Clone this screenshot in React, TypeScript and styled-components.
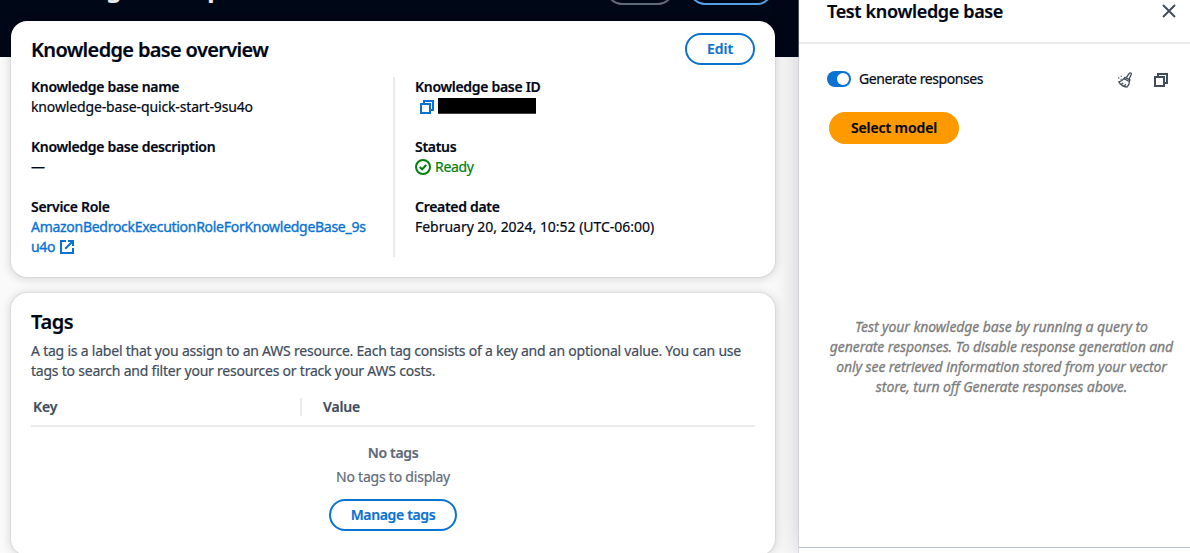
import React from "react";
import styled, { createGlobalStyle } from "styled-components";

const GlobalStyle = createGlobalStyle`
  * { box-sizing: border-box; }
  body {
    margin: 0;
    overflow: hidden;
    background: #fff;
    color: #000716;
    font: 400 14px/20px "Noto Sans", "Open Sans", sans-serif;
    -webkit-text-stroke: 0.2px;
  }
  h1, h2, p, dl, dt, dd { margin: 0; }
`;

const Shell = styled.div`
  display: flex;
  width: 1190px;
  height: 553px;
  overflow: hidden;
`;

const Main = styled.main`
  width: 799px;
  flex: none;
  background: #fafafa;
`;

const Banner = styled.header`
  display: flex;
  justify-content: space-between;
  align-items: flex-start;
  height: 57px;
  padding: 0 26px 0 11px;
  background: #000716;
`;

const PageTitle = styled.h1`
  margin-top: -27px;
  font-size: 24px;
  line-height: 30px;
  font-weight: 700;
  letter-spacing: -0.98px;
  color: #e9ebed;
`;

const BannerActions = styled.div`
  display: flex;
  gap: 15px;
  margin-top: -27px;
`;

const BannerButton = styled.span<{ $width: number; $color: string }>`
  width: ${(p) => p.$width}px;
  height: 32px;
  border: 2px solid ${(p) => p.$color};
  border-radius: 20px;
`;

const Cards = styled.div`
  display: flex;
  flex-direction: column;
  gap: 16px;
  margin: -36px 24px 0 11px;
`;

const Card = styled.section<{ $height: number }>`
  height: ${(p) => p.$height}px;
  padding: 12px 20px 20px;
  border-radius: 16px;
  background: #fff;
  box-shadow: 0 0 1px 1px rgba(0, 7, 22, 0.06), 0 1px 8px 2px rgba(0, 7, 22, 0.12);
`;

const CardHeader = styled.div`
  display: flex;
  justify-content: space-between;
  align-items: center;
  height: 32px;
`;

const Heading = styled.h2<{ $tracking?: number }>`
  font-size: 20px;
  line-height: 24px;
  font-weight: 600;
  letter-spacing: ${(p) => p.$tracking ?? -0.66}px;
`;

const CardTitle = styled(Heading)`
  padding-top: 2px;
`;

const OutlineButton = styled.button<{ $width: number; $tracking?: number }>`
  width: ${(p) => p.$width}px;
  height: 32px;
  padding: 0;
  border: 2px solid #0972d3;
  border-radius: 20px;
  background: #fff;
  color: #0972d3;
  font: inherit;
  font-weight: 600;
  letter-spacing: ${(p) => p.$tracking ?? 0}px;
`;

const Columns = styled.div`
  display: grid;
  grid-template-columns: 362px 1fr;
  margin-top: 12px;
`;

const Details = styled.dl<{ $divided?: boolean }>`
  display: flex;
  flex-direction: column;
  gap: 20px;
  height: 180px;
  ${(p) => p.$divided && "padding-left: 20px; border-left: 2px solid #e9ebed;"}
`;

const Label = styled.dt<{ $tracking?: number }>`
  font-weight: 600;
  letter-spacing: ${(p) => p.$tracking ?? -0.3}px;
`;

const Value = styled.dd<{ $tracking?: number }>`
  display: flex;
  align-items: center;
  height: 20px;
  letter-spacing: ${(p) => p.$tracking ?? 0}px;
`;

const RoleLink = styled.dd`
  width: 340px;
  color: #0972d3;
  letter-spacing: -0.28px;
  -webkit-text-stroke: 0.35px;
  svg { margin-left: 5px; vertical-align: -2px; }
`;

const IdValue = styled(Value)`
  gap: 4px;
  padding-left: 5px;
`;

const Redacted = styled.span`
  width: 98px;
  height: 16px;
  margin-top: -2px;
  background: #000;
  border-bottom: 1px solid #444;
`;

const Ready = styled(Value)`
  gap: 4px;
  color: #037f0c;
`;

const Description = styled.p`
  margin-top: 4px;
  color: #414d5c;
  letter-spacing: -0.219px;
  white-space: nowrap;
`;

const TagsHead = styled.div`
  display: grid;
  grid-template-columns: 271px 1fr;
  align-items: center;
  height: 38px;
  margin-top: 8px;
  border-bottom: 2px solid #e9ebed;
  color: #414d5c;
  font-weight: 600;
  letter-spacing: -0.15px;
`;

const HeadCell = styled.span<{ $divider?: boolean }>`
  height: 18px;
  line-height: 18px;
  padding-left: 2px;
  ${(p) => p.$divider && "padding-left: 21px; margin-left: -2px; border-left: 2px solid #e9ebed;"}
`;

const EmptyState = styled.div`
  display: flex;
  flex-direction: column;
  align-items: center;
  padding-top: 16px;
  color: #5f6b7a;
`;

const EmptyTitle = styled.p`
  font-weight: 600;
  letter-spacing: -0.35px;
`;

const EmptyText = styled.p`
  margin: 4px 0 12px;
  letter-spacing: -0.22px;
`;

const Panel = styled.aside`
  position: relative;
  display: flex;
  flex-direction: column;
  flex: 1;
  background: #fff;
  box-shadow: -1px 0 0 rgba(182, 190, 201, 0.4), 0 0 28px rgba(0, 7, 22, 0.2);
`;

const PanelHeader = styled.div`
  display: flex;
  justify-content: space-between;
  height: 44px;
  padding: 0 13px 0 28px;
  border-bottom: 2px solid #e9ebed;
`;

const PanelTitle = styled(Heading)`
  font-size: 18px;
  line-height: 22px;
`;

const CloseIcon = styled.svg`
  margin-top: 3px;
`;

const PanelBody = styled.div`
  display: flex;
  flex-direction: column;
  flex: 1;
  padding-top: 25px;
`;

const ToolRow = styled.div`
  display: flex;
  align-items: center;
  height: 20px;
  padding: 0 22px 0 28px;
`;

const Toggle = styled.span`
  display: flex;
  justify-content: flex-end;
  align-items: center;
  width: 24px;
  height: 16px;
  margin-right: 8px;
  padding-right: 2px;
  border-radius: 8px;
  background: #0972d3;
`;

const Knob = styled.span`
  width: 12px;
  height: 12px;
  border-radius: 50%;
  background: #fff;
`;

const ToggleLabel = styled.span`
  flex: 1;
  letter-spacing: -0.43px;
`;

const ToolIcons = styled.div`
  display: flex;
  align-items: center;
  gap: 21px;
  padding-top: 2px;
`;

const PrimaryButton = styled.button`
  width: 130px;
  height: 32px;
  margin: 23px 0 0 30px;
  padding: 0;
  border: 0;
  border-radius: 20px;
  background: #ff9900;
  color: #000716;
  font: inherit;
  font-weight: 600;
  letter-spacing: -0.1px;
`;

const Hint = styled.p`
  margin-top: 173px;
  padding-left: 14px;
  color: #7d7d7d;
  font-style: italic;
  text-align: center;
  letter-spacing: -0.08px;
  -webkit-text-stroke: 0.3px;
`;

const PanelFooter = styled.div`
  height: 6px;
  border-top: 1px solid #b6bec9;
`;

const CopyIcon = ({ color }: { color: string }) => (
  <svg width="14" height="14" viewBox="0 0 14 14" fill="none" stroke={color} strokeWidth="2">
    <path d="M1 4h9v9H1z M4 4V1h9v9h-3" />
  </svg>
);

const ExternalIcon = () => (
  <svg width="14" height="14" viewBox="0 0 14 14" fill="none" stroke="#0972d3" strokeWidth="2">
    <path d="M6 1H1v12h12V8 M8 1h5v5 M13 1L5.2 8.8" />
  </svg>
);

const CheckIcon = () => (
  <svg width="16" height="16" viewBox="0 0 16 16" fill="none" stroke="#037f0c" strokeWidth="2">
    <circle cx="8" cy="8" r="7" />
    <path d="M4.7 8l2.4 2.3 4.2-4.3" />
  </svg>
);

const BroomIcon = () => (
  <svg width="16" height="16" viewBox="0 0 16 16" fill="none" stroke="#414d5c" strokeWidth="1.3" strokeLinejoin="round">
    <path d="M9.3 5.7L12.2 1.3c.8-1 2.5-.2 2.1 1L12.1 7" />
    <path d="M8 5.3l5 2.5-.6 1.7-5.6-2.8z" />
    <path d="M6.8 6.7C5.6 8.6 4 9.5 1.8 9.9c1.4 2.6 4.2 4.7 8.2 5.2 1.6-1.3 2.4-3.2 2.4-5.6" />
    <path d="M4.4 12.6l1.8-1.5 M7.3 14.3l1.4-2.1" />
    <path d="M1.2 5.9h1.2 M3.7 4.3h1 M3.6 7.5h1" />
  </svg>
);

export default function App() {
  return (
    <>
      <GlobalStyle />
      <Shell>
        <Main>
          <Banner>
            <PageTitle>knowledge-base-quick-start-9su4o</PageTitle>
            <BannerActions>
              <BannerButton $width={68} $color="#5f6b7a" />
              <BannerButton $width={84} $color="#539fe5" />
            </BannerActions>
          </Banner>
          <Cards>
            <Card $height={256}>
              <CardHeader>
                <CardTitle>Knowledge base overview</CardTitle>
                <OutlineButton $width={70}>Edit</OutlineButton>
              </CardHeader>
              <Columns>
                <Details>
                  <div>
                    <Label>Knowledge base name</Label>
                    <Value $tracking={-0.14}>knowledge-base-quick-start-9su4o</Value>
                  </div>
                  <div>
                    <Label>Knowledge base description</Label>
                    <Value>—</Value>
                  </div>
                  <div>
                    <Label>Service Role</Label>
                    <RoleLink>
                      AmazonBedrockExecutionRoleForKnowledgeBase_9s<br />u4o
                      <ExternalIcon />
                    </RoleLink>
                  </div>
                </Details>
                <Details $divided>
                  <div>
                    <Label>Knowledge base ID</Label>
                    <IdValue><CopyIcon color="#0972d3" /><Redacted /></IdValue>
                  </div>
                  <div>
                    <Label>Status</Label>
                    <Ready $tracking={-0.3}><CheckIcon />Ready</Ready>
                  </div>
                  <div>
                    <Label>Created date</Label>
                    <Value $tracking={-0.03}>February 20, 2024, 10:52 (UTC-06:00)</Value>
                  </div>
                </Details>
              </Columns>
            </Card>
            <Card $height={262}>
              <CardHeader>
                <CardTitle $tracking={-0.4}>Tags</CardTitle>
              </CardHeader>
              <Description>
                A tag is a label that you assign to an AWS resource. Each tag consists of a key and an optional value. You can use
                <br />
                tags to search and filter your resources or track your AWS costs.
              </Description>
              <TagsHead>
                <HeadCell>Key</HeadCell>
                <HeadCell $divider>Value</HeadCell>
              </TagsHead>
              <EmptyState>
                <EmptyTitle>No tags</EmptyTitle>
                <EmptyText>No tags to display</EmptyText>
                <OutlineButton $width={128} $tracking={-0.35}>Manage tags</OutlineButton>
              </EmptyState>
            </Card>
          </Cards>
        </Main>
        <Panel>
          <PanelHeader>
            <PanelTitle $tracking={-0.35}>Test knowledge base</PanelTitle>
            <CloseIcon width="16" height="16" viewBox="0 0 16 16" fill="none" stroke="#414d5c" strokeWidth="2">
              <path d="M2 2l12 12M14 2L2 14" />
            </CloseIcon>
          </PanelHeader>
          <PanelBody>
            <ToolRow>
              <Toggle><Knob /></Toggle>
              <ToggleLabel>Generate responses</ToggleLabel>
              <ToolIcons>
                <BroomIcon />
                <CopyIcon color="#414d5c" />
              </ToolIcons>
            </ToolRow>
            <PrimaryButton>Select model</PrimaryButton>
            <Hint>
              Test your knowledge base by running a query to<br />
              generate responses. To disable response generation and<br />
              only see retrieved information stored from your vector<br />
              store, turn off Generate responses above.
            </Hint>
          </PanelBody>
          <PanelFooter />
        </Panel>
      </Shell>
    </>
  );
}
